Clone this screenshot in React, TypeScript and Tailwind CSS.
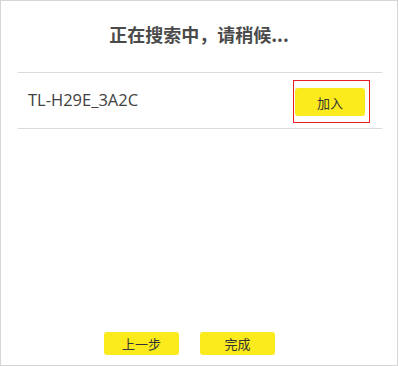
import React from "react";

export default function App() {
  const cjk = { fontFamily: '"Noto Sans CJK SC", "Noto Sans", sans-serif' };
  return (
    <div className="w-[399px] h-[366px] bg-white" style={cjk}>
      <div className="w-[398px] h-[366px] border border-[#d6d6d6] flex flex-col">
        <div className="pt-[21px] text-center text-[18px] leading-[24px] font-bold text-[#4a4a4a]">
          正在搜索中，请稍候...
        </div>
        <div className="mt-[26px] ml-[17px] w-[364px] border-t border-b border-[#dadada] h-[57px] flex items-center justify-between pl-[10px] pr-[12px]">
          <span
            className="text-[16.5px] text-[#404040] leading-none"
            style={{ fontFamily: '"Open Sans", "Noto Sans", sans-serif' }}
          >
            TL-H29E_3A2C
          </span>
          <div className="border border-[#ec1c24] pt-[7px] pl-[1px] pr-[4px] pb-[6px] mt-[2px]">
            <button className="block w-[70px] h-[28px] rounded-[3px] bg-[#fbea1c] text-[13px] text-[#333] leading-none">
              加入
            </button>
          </div>
        </div>
        <div className="mt-auto pb-[10px] pl-[103px] flex gap-[21px]">
          <button className="w-[75px] h-[23px] rounded-[3px] bg-[#fbea1c] text-[13px] text-[#333] leading-none">
            上一步
          </button>
          <button className="w-[75px] h-[23px] rounded-[3px] bg-[#fbea1c] text-[13px] text-[#333] leading-none">
            完成
          </button>
        </div>
      </div>
    </div>
  );
}
